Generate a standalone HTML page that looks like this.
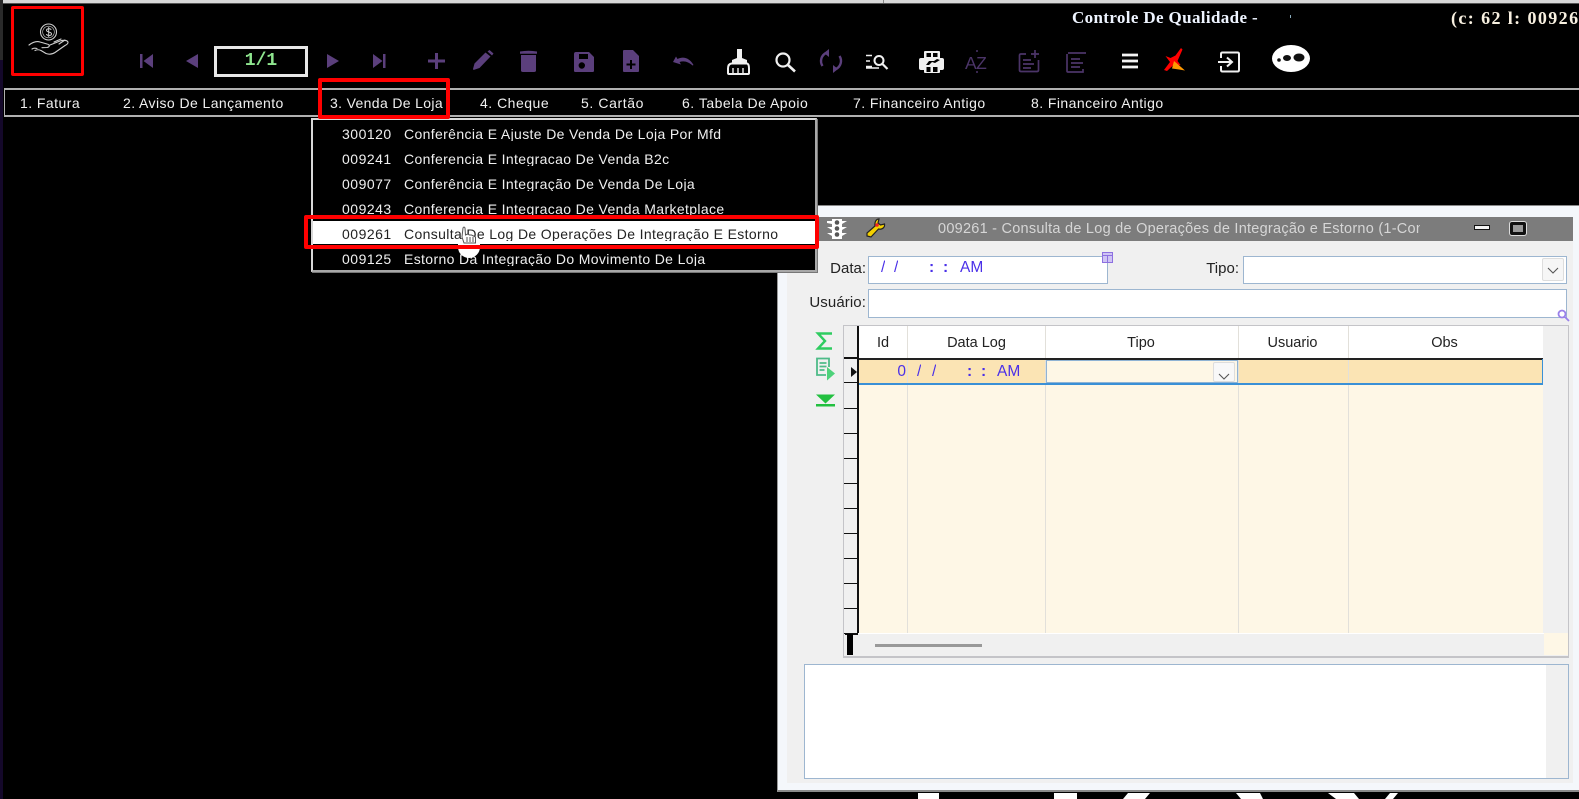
<!DOCTYPE html>
<html><head><meta charset="utf-8"><style>
html,body{margin:0;padding:0;background:#000;width:1579px;height:799px;overflow:hidden}
#p{position:relative;width:1579px;height:799px;overflow:hidden;background:#000;font-family:"Liberation Sans",sans-serif;font-size:14px;filter:blur(.35px)}
#p div,#p span,#p svg{position:absolute}
.t{white-space:nowrap;line-height:18px;height:18px;overflow:hidden}
.m{color:#f0f0f0;top:94px;font-size:14px;height:17px}
.c{color:#f0f0f0;left:342px;font-size:14px;height:16px;letter-spacing:.5px}
.n{color:#f0f0f0;left:404px;font-size:14px;height:16px;letter-spacing:.36px}
.l{color:#222;font-size:15px;text-align:right}
.h{color:#222;font-size:14.500px;text-align:center;top:334px}
.v{color:#4a30e8;font-size:15.500px}
.r{border:3px solid #f00;box-sizing:border-box;border-radius:2px;z-index:20}
.f{background:#fff;border:1px solid #9db6d0;box-sizing:border-box}
.sep{width:1px;background:#e2e0da;top:326px;height:307px}
.rh{left:844px;width:13px;height:23.500px;background:#f0f0f0;border-bottom:1.500px solid #111}
svg{overflow:visible}
</style></head><body><div id="p">
<div style="left:3px;top:0;width:1576px;height:3px;background:#d8d8d8"></div>
<div style="left:3px;top:3px;width:1576px;height:1px;background:#555"></div>
<div style="left:883px;top:0;width:1px;height:3px;background:#888"></div>
<div style="left:0;top:0;width:3px;height:60px;background:#2a2a2a"></div>
<div style="left:0;top:60px;width:3px;height:739px;background:#14082a"></div>

<div class="t" style="left:1072px;top:7px;color:#eef4ff;font-weight:bold;font-size:17px;font-family:'Liberation Serif',serif;letter-spacing:.36px;height:22px;line-height:22px">Controle De Qualidade -</div>
<div class="t" style="left:1451px;top:7px;color:#f8f0e0;font-weight:bold;font-size:18px;font-family:'Liberation Serif',serif;letter-spacing:1.400px;height:22px;line-height:22px">(c: 62 l: 00926</div>
<div style="left:1290px;top:15px;width:1px;height:3px;background:#8ab"></div>

<svg style="left:28px;top:24px" width="42" height="38" viewBox="0 0 42 38" fill="none" stroke="#cfcfcf" stroke-width="1.100" stroke-linecap="round" stroke-linejoin="round">
<circle cx="20.500" cy="8" r="8"/><circle cx="20.500" cy="8" r="5.800" stroke-width=".6"/>
<path d="M23 5.500c-1-1.200-4.500-1.200-4.500.8 0 2.400 5 1.200 5 3.600 0 2-3.700 2-5 .6M20.700 3.500v9" stroke-width="1"/>
<path d="M1 21c4-3 8-4 11-3l7 2c3 .6 3 3 0 3.500l-5 .2M22 21l10-4c3-1 8-1 8 1.500 0 1-1 2-3 3l-10 7c-3 2-6 2-9 1l-5-3c-2-1-4-1-6 0M33 15l-7 3M37 16l-6 4M4 25c1-.7 3-1 5-.5"/></svg>

<div style="left:214px;top:46px;width:88px;height:25px;border:3px solid #e8e8e8"></div>
<div class="t" style="left:214px;top:50px;width:94px;text-align:center;color:#8fe68f;font-weight:bold;font-family:'Liberation Mono',monospace;font-size:18px;height:22px;line-height:22px">1/1</div>

<!-- toolbar -->
<svg style="left:0;top:0" width="1579" height="90" viewBox="0 0 1579 90" fill="#5b3f7c">
<path d="M140 54h2.500v14H140zM153 54v14l-9.500-7z"/>
<path d="M198 54v14l-12-7z"/>
<path d="M327 54v14l12-7z"/>
<path d="M373 54v14l9.500-7zM383 54h2.500v14H383z"/>
<path d="M435 53h3v6.500h7v3h-7V69h-3v-6.500h-7v-3h7z"/>
<path d="M473 69l1.500-5.500 11-11 5 4-11 11.500-6 2zM487.500 51.500l2-1.500 4 3.500-1.500 2z"/>
<path d="M521 55h15v15.500q0 1.500-2 1.500h-11q-2 0-2-1.500zM520 51.500q8.500-1.500 17 0v2.200h-17z"/>
<path fill-rule="evenodd" d="M576 52h13l5 5v14q0 1-2 1h-16q-2 0-2-1V54q0-2 2-2zm3 2v5h9v-5zm6 11.500a3.200 3.200 0 1 0-6.400 0 3.200 3.200 0 0 0 6.400 0z"/>
<path fill-rule="evenodd" d="M624 50h9l6 6v15q0 1-1 1h-14q-1 0-1-1V51q0-1 1-1zm6 10v3.500h-3.500v2h3.500V69h2v-3.500h3.500v-2H632V60z"/>
<path d="M673 62l3-5.500 1.500 2.500c6-3 12-1 16 6l-1 .5c-4-3.500-8-5-13-3.500l1.500 2.500z"/>
<g fill="none" stroke="#5b3f7c" stroke-width="2.400">
<path d="M826 53a9 9 0 0 0-3.500 13M836 69a9 9 0 0 0 3.500-13"/>
<path fill="#5b3f7c" stroke="none" d="M829 49v8l-5-4zM833 73v-8l5 4z"/></g>
<g fill="none" stroke="#4b3468" stroke-width="1.700">
<path d="M1026 54h-5q-1.500 0-1.500 1.500V70q0 1.500 1.500 1.500h16q1.500 0 1.500-1.500V60M1023 60h8M1023 64h11M1023 68h8M1035 50v8M1031 54h8"/>
<path d="M1068 53h18M1067 54v17q0 1 1 1h15v-3M1071 59h9M1071 63h12M1071 67h9"/></g>
<text x="965" y="69" fill="#4b3468" font-family="Liberation Sans,sans-serif" font-size="17.500" letter-spacing="-.5">AZ</text>
<circle cx="977" cy="51" r="1" fill="#4b3468"/><circle cx="977" cy="72" r="1" fill="#4b3468"/>
</svg>

<svg style="left:0;top:0" width="1579" height="90" viewBox="0 0 1579 90" fill="none" stroke="#f0f0f0" stroke-width="2">
<path fill="#f0f0f0" stroke="none" d="M737 49h5v9l5 2v3h-15v-3l5-2z"/>
<path d="M731.500 63.500h15.500q2 .5 2 5V73q0 1-1 1h-19q-1 0-1-1v-4.500q0-4.500 3.500-5z"/>
<path d="M733 68v5M738 68v5M743 68v5" stroke-width="1.400"/>
<circle cx="783" cy="60" r="6.500" stroke-width="2.200"/><path d="M788 65l7 6.500" stroke-width="2.600"/>
<path d="M866 55.500h6M866 61h4M866 66.500h6M866 68h13" stroke-width="1.600"/>
<circle cx="879" cy="60.500" r="4.500" stroke-width="2"/><path d="M882.500 64l5 5" stroke-width="2.200"/>
<path fill="#f0f0f0" stroke="none" fill-rule="evenodd" d="M925 51h14q1 0 1 1v6h2q2 0 2 2v8q0 2-2 2h-2v2q0 1-1 1h-14q-1 0-1-1v-2h-3q-2 0-2-2v-8q0-2 2-2h3v-6q0-1 1-1zm1.500 2v4h4.500v-4zm6.500 0v4h4.500v-4zm-4 8l-3 4h3l3-3 3 1 5-3-3-1-3 2zm-2.500 6v5h4v-5zm6.500 0v5h4.500v-5z"/>
<path d="M1122 55h16M1122 61h16M1122 67h16" stroke-width="2.800" stroke="#f4f4f4"/>
<path d="M1221 58v-4q0-1.500 1.500-1.500h15q1.500 0 1.500 1.500v16q0 1.500-1.500 1.500h-15q-1.500 0-1.500-1.500v-4" stroke-width="2"/>
<path d="M1218 62h13M1227 57.500l5 4.500-5 4.500" stroke-width="2"/>
<ellipse cx="1291" cy="58.500" rx="19" ry="13.500" fill="#fff" stroke="none"/>
<ellipse cx="1299" cy="57.500" rx="5.500" ry="4" fill="#111" stroke="none"/>
<ellipse cx="1287" cy="58" rx="4" ry="3" fill="#111" stroke="none"/>
<circle cx="1279" cy="60" r="1.800" fill="#111" stroke="none"/>
<path fill="#f00" stroke="none" d="M1181 48l1.500 1.500-5 11.500 3 4-4 1 2 1-5-2-6.500 6-3-1 6-8-4.500-6 5 2 5-2.500z"/>
<path fill="#f90" stroke="none" d="M1174 61l7 6 4 3.500-6-1-7-1z"/>
</svg>

<!-- menu -->
<div style="left:4px;top:88px;width:1575px;height:2px;background:#b0b0b0"></div>
<div style="left:4px;top:115px;width:1575px;height:2px;background:#b0b0b0"></div>
<div style="left:4px;top:88px;width:1px;height:29px;background:#b0b0b0"></div>
<div class="t m" style="left:20px;letter-spacing:.45px">1. Fatura</div>
<div class="t m" style="left:123px;letter-spacing:.42px">2. Aviso De Lançamento</div>
<div class="t m" style="left:330px;letter-spacing:.35px">3. Venda De Loja</div>
<div class="t m" style="left:480px;letter-spacing:.5px">4. Cheque</div>
<div class="t m" style="left:581px;letter-spacing:.6px">5. Cartão</div>
<div class="t m" style="left:682px;letter-spacing:.5px">6. Tabela De Apoio</div>
<div class="t m" style="left:853px;letter-spacing:.44px">7. Financeiro Antigo</div>
<div class="t m" style="left:1031px;letter-spacing:.44px">8. Financeiro Antigo</div>

<!-- window -->
<div style="left:777px;top:205px;width:802px;height:587px;background:#f4f7fb;border-bottom:2px solid #8a8a8a;border-left:1px solid #999;box-sizing:border-box"></div>
<div style="left:777px;top:205px;width:802px;height:1px;background:#888"></div>
<div style="left:787px;top:217px;width:786px;height:566px;background:#f0f0f0"></div>
<div style="left:787px;top:217px;width:786px;height:24px;background:#7c7c7c"></div>
<div class="t" style="left:938px;top:220px;width:482px;color:#d6d6d6;font-size:14.500px;letter-spacing:.25px">009261 - Consulta de Log de Operações de Integração e Estorno (1-Con</div>
<svg style="left:826px;top:218px" width="22" height="22" viewBox="0 0 22 22"><path fill="#fff" d="M6 1h10v20H6zM1 3h5l0 3-5-1zM16 3h5l-5 3zM1 9h5v3zM16 9h5l-5 3zM1 15h5v3zM16 15h5l-5 3z"/><circle cx="11" cy="4.500" r="2.300" fill="#555"/><circle cx="11" cy="10.500" r="2.300" fill="#555"/><circle cx="11" cy="16.500" r="2.300" fill="#555"/></svg>
<svg style="left:865px;top:217px" width="22" height="22" viewBox="0 0 22 22"><path fill="#f4d000" stroke="#222" stroke-width="1.200" d="M14 2l-1 4 2.500 2 4-1c.6 3-2 6-6 5L6 20l-4-1 0-3 8-7C9.500 5 11 2 14 2z"/><circle cx="12" cy="8" r="1.800" fill="#e22"/></svg>
<div style="left:1474px;top:225px;width:14px;height:3px;background:#f4f4f4;border:1px solid #111"></div>
<div style="left:1510px;top:222px;width:10px;height:7px;border:3px solid #111;background:#9a9a9a;border-radius:2px;box-shadow:0 0 0 1px #ddd"></div>

<div class="t l" style="left:800px;top:260px;width:66px">Data:</div>
<div class="t l" style="left:800px;top:294px;width:66px;letter-spacing:.1px">Usuário:</div>
<div class="t l" style="left:1180px;top:260px;width:59px">Tipo:</div>
<div class="f" style="left:868px;top:256px;width:240px;height:28px"></div>
<div class="f" style="left:1243px;top:256px;width:324px;height:28px"></div>
<div class="f" style="left:868px;top:289px;width:699px;height:29px"></div>
<div class="t v" style="left:881px;top:259px">/</div><div class="t v" style="left:894px;top:259px">/</div>
<div class="t v" style="left:929px;top:259px;font-weight:bold">:</div><div class="t v" style="left:943px;top:259px;font-weight:bold">:</div>
<div class="t v" style="left:960px;top:259px">AM</div>
<svg style="left:1102px;top:252px" width="12" height="12" viewBox="0 0 12 12" fill="#cfc4f4" stroke="#8d70e0" stroke-width="1"><rect x=".5" y=".5" width="10" height="10"/><path d="M.5 3.500h10M5.500 3.500v7" fill="none"/></svg>
<div style="left:1542px;top:258px;width:22px;height:23px;background:#f6f6f6;border:1px solid #ddd;box-sizing:border-box;border-radius:2px"></div>
<svg style="left:1546px;top:267px" width="14" height="8" fill="none" stroke="#555" stroke-width="1.100"><path d="M2 1l5 5 5-5"/></svg>
<svg style="left:1557px;top:309px" width="13" height="13" fill="none" stroke="#9a80ea" stroke-width="1.800"><circle cx="5" cy="5" r="3.500"/><path d="M8 8l4 4"/></svg>

<!-- side icons -->
<svg style="left:815px;top:331px" width="20" height="80" viewBox="0 0 20 80">
<path fill="none" stroke="#2ecc60" stroke-width="2.400" d="M17 2.500H3l7 7.500-7 7.500h14"/>
<path fill="none" stroke="#4dbb88" stroke-width="1.800" d="M14 36V27.500H2V44h9M4.500 32h7M4.500 35.500h7M4.500 39h5"/>
<path fill="#4dd27a" d="M12 36l8 6.500-8 7z"/>
<path fill="#22c040" d="M1 63.500h19l-9.500 9zM1 73h19v2.500H1z"/>
</svg>

<!-- grid -->
<div style="left:843px;top:325px;width:726px;height:333px;background:#f0f0f0;border:1px solid #c4c4c8;border-bottom-width:2px;box-sizing:border-box"></div>
<div style="left:858px;top:326px;width:685px;height:32px;background:#fff"></div>
<div style="left:858px;top:358px;width:685px;height:275px;background:#fef7e6"></div>
<div style="left:858px;top:359px;width:685px;height:25px;background:#fbe4b4"></div>
<div class="sep" style="left:907px"></div><div class="sep" style="left:1045px"></div><div class="sep" style="left:1238px"></div><div class="sep" style="left:1348px"></div>
<div style="left:1046px;top:360px;width:192px;height:23px;background:#fef7e6;border:1px solid #8fb3d4;box-sizing:border-box"></div>
<div style="left:858px;top:358px;width:685px;height:1.500px;background:#222"></div>
<div style="left:858px;top:383px;width:685px;height:1.500px;background:#3a90d6"></div>
<div style="left:1542px;top:359px;width:1px;height:25px;background:#3a90d6"></div>
<div style="left:858px;top:359px;width:1px;height:25px;background:#3a90d6"></div>
<div style="left:1213px;top:362px;width:22px;height:20px;background:#f8f8f8;border:1px solid #ddd;box-sizing:border-box;border-radius:2px"></div>
<svg style="left:1217px;top:373px" width="14" height="8" fill="none" stroke="#555" stroke-width="1.100"><path d="M2 1l5 5 5-5"/></svg>

<div style="left:857px;top:326px;width:1.500px;height:307px;background:#111"></div>
<div class="rh" style="top:358px;height:24px"></div>
<div class="rh" style="top:384px"></div><div class="rh" style="top:409px"></div><div class="rh" style="top:434px"></div><div class="rh" style="top:459px"></div><div class="rh" style="top:484px"></div><div class="rh" style="top:509px"></div><div class="rh" style="top:534px"></div><div class="rh" style="top:559px"></div><div class="rh" style="top:584px"></div><div class="rh" style="top:609px"></div>
<div style="left:844px;top:357px;width:13px;height:1.500px;background:#111"></div>
<svg style="left:850px;top:367px" width="7" height="10"><path fill="#111" d="M1 0l6 5-6 5z"/></svg>
<div style="left:845px;top:633px;width:13px;height:1.500px;background:#111"></div>
<div style="left:847px;top:634px;width:6px;height:21px;background:#000"></div>
<div style="left:1544px;top:633px;width:24px;height:22px;background:#fef7e6"></div>
<div style="left:858px;top:633px;width:686px;height:1px;background:#fff"></div>
<div style="left:875px;top:644px;width:107px;height:3px;background:#999"></div>

<div class="t h" style="left:858px;width:50px">Id</div>
<div class="t h" style="left:908px;width:137px">Data Log</div>
<div class="t h" style="left:1046px;width:190px">Tipo</div>
<div class="t h" style="left:1239px;width:107px">Usuario</div>
<div class="t h" style="left:1349px;width:191px">Obs</div>
<div class="t v" style="left:896px;top:363px;width:10px;text-align:right">0</div>
<div class="t v" style="left:917px;top:363px">/</div><div class="t v" style="left:932px;top:363px">/</div>
<div class="t v" style="left:967px;top:363px;font-weight:bold">:</div><div class="t v" style="left:981px;top:363px;font-weight:bold">:</div>
<div class="t v" style="left:997px;top:363px">AM</div>

<!-- memo -->
<div class="f" style="left:804px;top:664px;width:765px;height:115px"></div>
<div style="left:1546px;top:665px;width:22px;height:113px;background:#f0f0f0"></div>

<!-- bottom shapes -->
<svg style="left:0;top:790px" width="1579" height="9"><path fill="#fff" d="M918 3h21v6h-21zM1054 3h23v6h-23zM1128 3h22l-5 6h-22zM1236 3h24l3 6h-22zM1328 3h26l5 6h-23zM1390 3h8l-5 6h-8z"/></svg>

<!-- dropdown -->
<div style="left:311px;top:118px;width:506px;height:154px;background:#000;border:2px solid #d8d8d8;border-right-color:#a8a8a8;border-bottom-color:#a8a8a8;box-sizing:border-box;z-index:5;box-shadow:1px 1px 0 #777"></div>
<div style="z-index:6;left:0;top:0;width:1579px;height:799px">
<div class="t c" style="top:125px">300120</div><div class="t n" style="top:125px">Conferência E Ajuste De Venda De Loja Por Mfd</div>
<div class="t c" style="top:150px">009241</div><div class="t n" style="top:150px">Conferencia E Integracao De Venda B2c</div>
<div class="t c" style="top:175px">009077</div><div class="t n" style="top:175px">Conferência E Integração De Venda De Loja</div>
<div class="t c" style="top:200px">009243</div><div class="t n" style="top:200px">Conferencia E Integracao De Venda Marketplace</div>
<div style="left:313px;top:221px;width:502px;height:23px;background:#fff"></div>
<div class="t c" style="top:225px;color:#222">009261</div><div class="t n" style="top:225px;color:#222">Consulta De Log De Operações De Integração E Estorno</div>
<div class="t c" style="top:250px">009125</div><div class="t n" style="top:250px">Estorno Da Integração Do Movimento De Loja</div>
<div style="left:458px;top:243px;width:22px;height:15px;background:#fff;border-radius:0 0 11px 11px"></div>
<svg style="left:460px;top:226px" width="20" height="18" viewBox="0 0 20 18" fill="#fff" stroke="#555" stroke-width="1"><path d="M3 2q1-2 2 0l.5 7 2-1 2 1 2 0 2 1 2 1v6H4L2 11z"/><path d="M7 11v5M10 11v5M13 11v5" fill="none"/></svg>
</div>

<!-- red boxes -->
<div class="r" style="left:11px;top:6px;width:73px;height:70px"></div>
<div class="r" style="left:318px;top:78px;width:132px;height:41px;border-width:4px"></div>
<div class="r" style="left:304px;top:215px;width:515px;height:34px;border-width:4px"></div>
</div></body></html>
